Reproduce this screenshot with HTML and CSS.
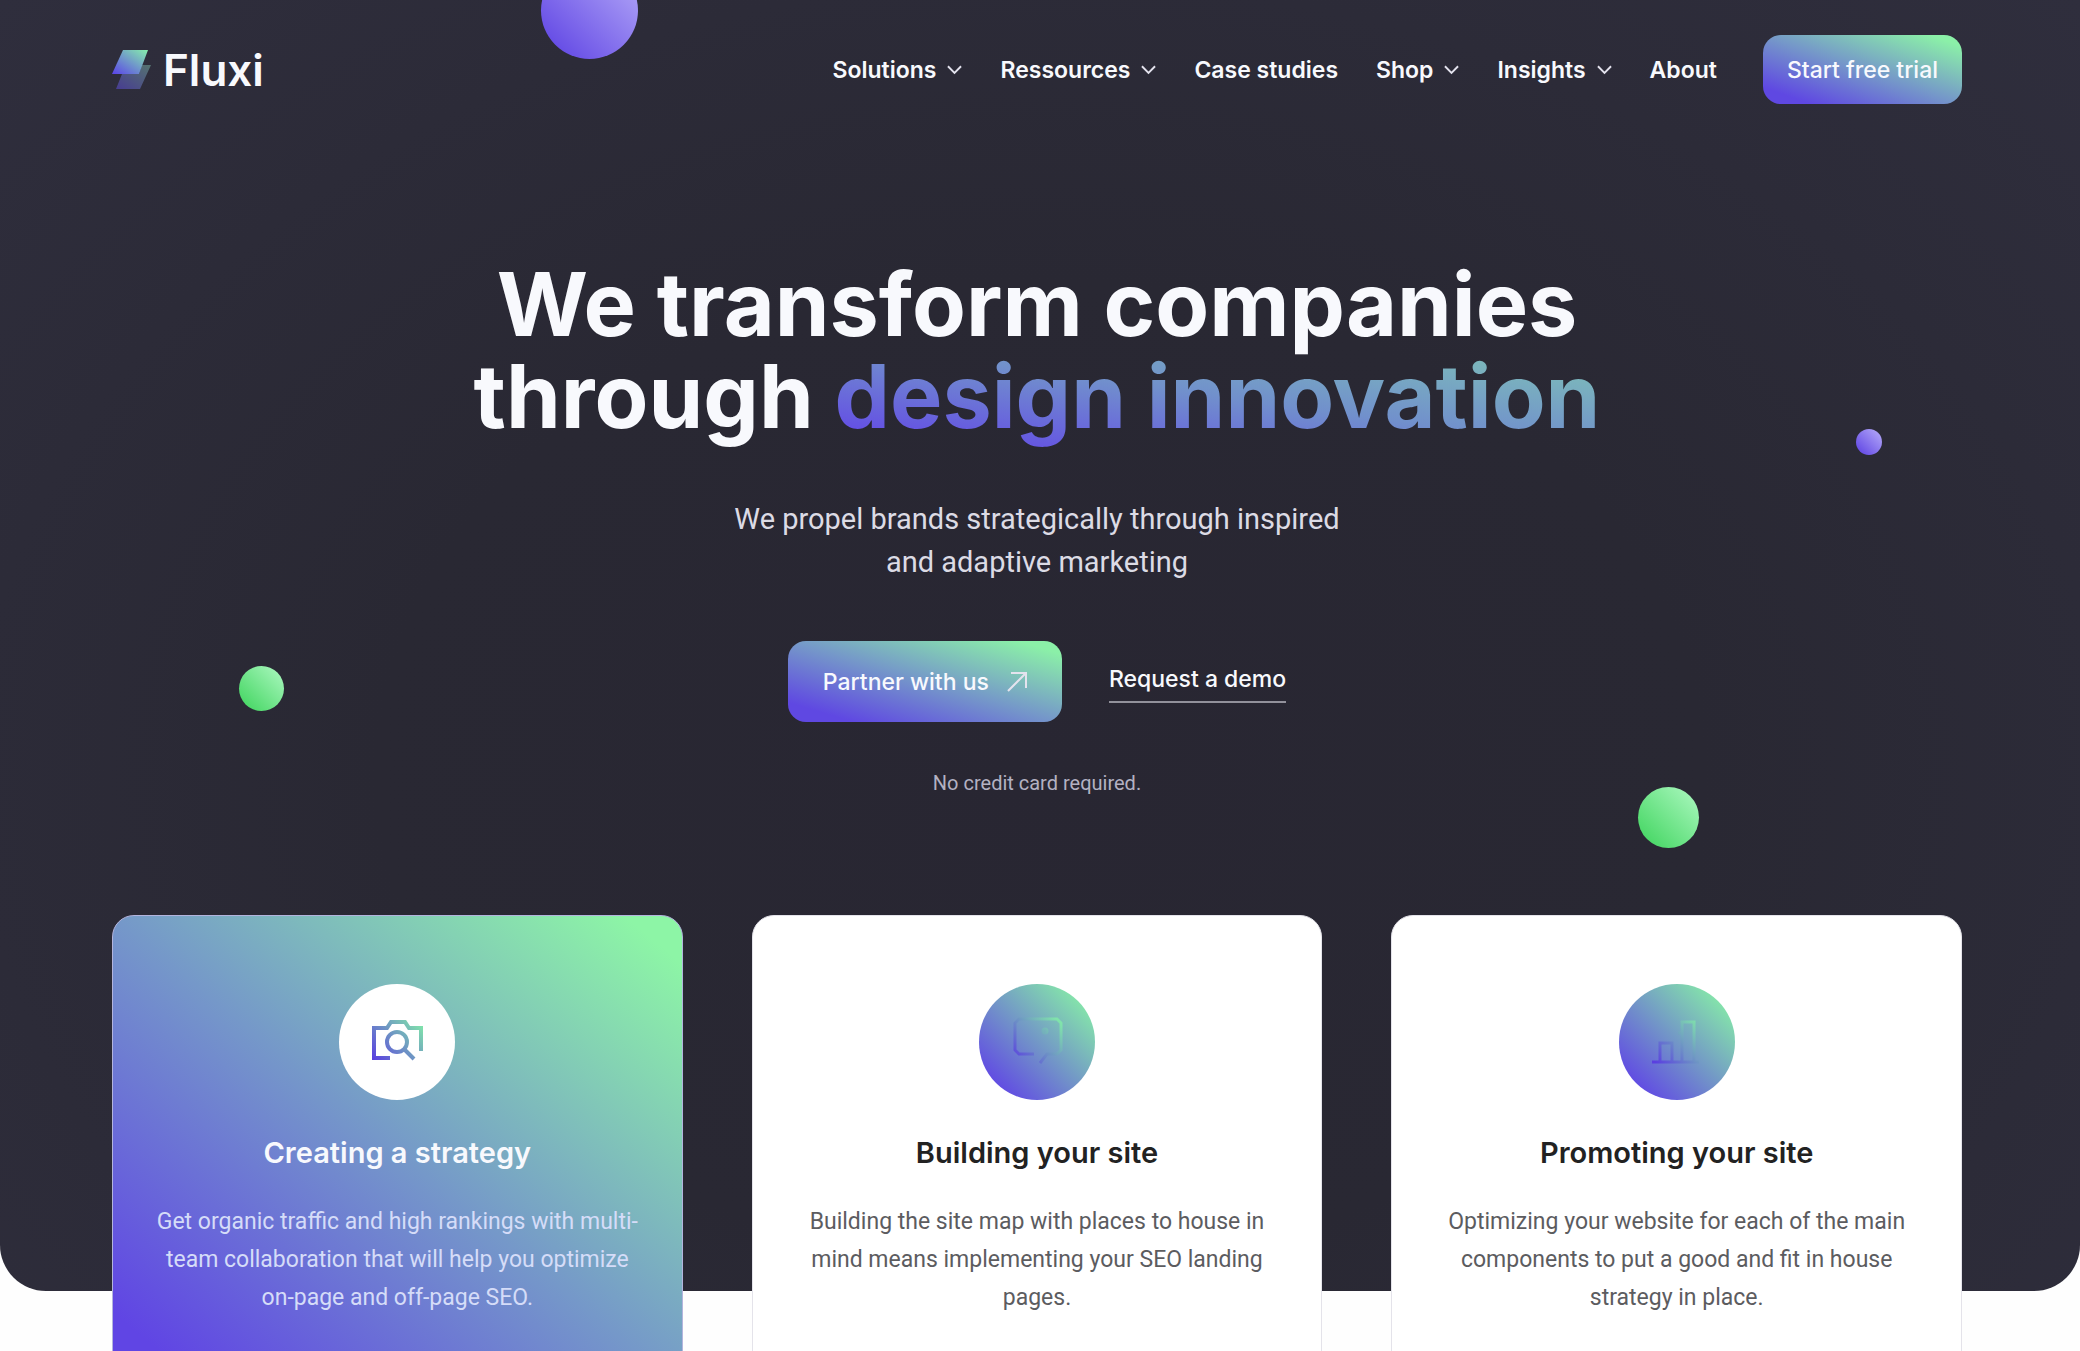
FILE: index.html
```html
<!DOCTYPE html>
<html lang="en">
<head>
<meta charset="utf-8">
<meta name="viewport" content="width=device-width, initial-scale=1">
<title>Fluxi</title>
<link rel="stylesheet" href="styles.css">
</head>
<body>
<div class="hero">
  <span class="ball ball-top"></span>
  <span class="ball ball-right"></span>
  <span class="ball ball-left"></span>
  <span class="ball ball-low"></span>

  <header class="header">
    <a class="logo" href="#">
      <svg width="40" height="40" viewBox="0 0 40 40" aria-hidden="true">
        <defs>
          <linearGradient id="logo-front" x1="0" y1="1" x2="1" y2="0"><stop offset="0" stop-color="#5a42e8"/><stop offset="1" stop-color="#86efac"/></linearGradient>
          <linearGradient id="logo-back" x1="0" y1="1" x2="1" y2="0"><stop offset="0" stop-color="#473c92"/><stop offset="1" stop-color="#55736f"/></linearGradient>
        </defs>
        <path d="M30 15H39L28 39H4L10 24H27Z" fill="url(#logo-back)"/>
        <path d="M11 0H36L27 24H0Z" fill="url(#logo-front)"/>
      </svg>
      <span>Fluxi</span>
    </a>
    <nav class="nav">
      <a href="#">Solutions <svg class="chevron" viewBox="0 0 16 10"><path d="M1 1L8 8L15 1"/></svg></a>
      <a href="#">Ressources <svg class="chevron" viewBox="0 0 16 10"><path d="M1 1L8 8L15 1"/></svg></a>
      <a href="#">Case studies</a>
      <a href="#">Shop <svg class="chevron" viewBox="0 0 16 10"><path d="M1 1L8 8L15 1"/></svg></a>
      <a href="#">Insights <svg class="chevron" viewBox="0 0 16 10"><path d="M1 1L8 8L15 1"/></svg></a>
      <a href="#">About</a>
    </nav>
    <button class="button button-small" type="button">Start free trial</button>
  </header>

  <section class="intro">
    <h1>We transform companies<br>through <span class="accent">design innovation</span></h1>
    <p class="lead">We propel brands strategically through inspired<br>and adaptive marketing</p>
    <div class="actions">
      <button class="button" type="button">Partner with us
        <svg class="arrow" viewBox="0 0 20 20"><path d="M1 19L19 1M4 1H19V16"/></svg>
      </button>
      <a class="demo" href="#">Request a demo</a>
    </div>
    <p class="note">No credit card required.</p>
  </section>
</div>

<main class="cards">
  <article class="card card-active">
    <svg class="icon" viewBox="0 0 116 116" aria-hidden="true">
      <defs>
        <linearGradient id="disc" x1="0" y1="1" x2="1" y2="0"><stop offset=".12" stop-color="#6048e4"/><stop offset=".9" stop-color="#86eba8"/></linearGradient>
        <linearGradient id="line" gradientUnits="userSpaceOnUse" x1="36" y1="78" x2="80" y2="38"><stop offset="0" stop-color="#5a3fe0"/><stop offset="1" stop-color="#80e3ab"/></linearGradient>
      </defs>
      <circle cx="58" cy="58" r="58" fill="#fff"/>
      <g fill="none" stroke="url(#line)" stroke-width="4">
        <path d="M51 74H35V44H48L52 38H66L70 44H82V67"/>
        <circle cx="58" cy="58" r="10"/>
        <path d="M65 65L75 75"/>
      </g>
    </svg>
    <h2>Creating a strategy</h2>
    <p>Get organic traffic and high rankings with multi-<br>team collaboration that will help you optimize<br>on-page and off-page SEO.</p>
  </article>
  <article class="card">
    <svg class="icon" viewBox="0 0 116 116" aria-hidden="true">
      <circle cx="58" cy="58" r="58" fill="url(#disc)"/>
      <g fill="none" stroke="url(#line)" stroke-width="3">
        <path d="M55 70H40L36 66V39L40 35H78L82 39V66L78 70H68L61 79"/>
        <circle cx="66" cy="47" r="2"/>
      </g>
    </svg>
    <h2>Building your site</h2>
    <p>Building the site map with places to house in<br>mind means implementing your SEO landing<br>pages.</p>
  </article>
  <article class="card">
    <svg class="icon" viewBox="0 0 116 116" aria-hidden="true">
      <circle cx="58" cy="58" r="58" fill="url(#disc)"/>
      <g fill="none" stroke="url(#line)" stroke-width="3">
        <path d="M33 78H80M41 78V59H53V78M53 78M59 49H63M63 78V38H75V78"/>
      </g>
    </svg>
    <h2>Promoting your site</h2>
    <p>Optimizing your website for each of the main<br>components to put a good and fit in house<br>strategy in place.</p>
  </article>
</main>
</body>
</html>
```
FILE: styles.css
```css
* { box-sizing: border-box; }

body {
  margin: 0;
  background: #fefefe;
  color: #222;
  font-family: Roboto, "Liberation Sans", sans-serif;
}

h1, h2, p { margin: 0; }
a { color: inherit; text-decoration: none; }

.hero {
  position: relative;
  overflow: hidden;
  padding: 35px 118px 492px 112px;
  border-radius: 0 0 46px 46px;
  background: radial-gradient(ellipse at 50% 60%, #282632 0%, #292833 45%, #2f2e3d 100%);
  color: #f8f9fd;
}

.header, .nav, .nav a, .logo, .actions, .button {
  display: flex;
  align-items: center;
}

.header { position: relative; }

.logo {
  gap: 11px;
  margin-right: auto;
  font: 600 44px/48px Inter, sans-serif;
}

.nav {
  gap: 38px;
  margin-right: 46px;
  font: 600 23px/32px Inter, sans-serif;
}

.nav a { gap: 11px; white-space: nowrap; }

.chevron, .arrow {
  fill: none;
  stroke: #e4e3ee;
  stroke-width: 2;
}

.chevron { width: 15px; height: 10px; }
.arrow { width: 20px; height: 20px; }

.button {
  justify-content: center;
  gap: 18px;
  height: 81px;
  padding: 0 35px;
  border: 0;
  border-radius: 18px;
  background: linear-gradient(to top right, #5f48e2 12%, #7598c9 50%, #8bf0a8 92%);
  color: #f8f9fd;
  font: 500 23px/32px Inter, sans-serif;
  white-space: nowrap;
}

.button-small { height: 69px; padding: 0 24px; }

.intro {
  position: relative;
  display: flex;
  flex-direction: column;
  align-items: center;
  padding-top: 154px;
  text-align: center;
}

h1 { font: 700 88px/92px Inter, sans-serif; }

.accent {
  background: linear-gradient(to top right, #6450e4 10%, #7190cc 50%, #80c8b4 100%);
  background-clip: text;
  -webkit-background-clip: text;
  color: transparent;
}

.lead {
  margin-top: 56px;
  color: #dcdbe5;
  font-size: 29px;
  line-height: 43px;
}

.actions { gap: 47px; margin-top: 57px; }

.demo {
  padding-bottom: 4px;
  border-bottom: 2px solid #92919b;
  font: 500 23px/36px Inter, sans-serif;
}

.note {
  margin-top: 45px;
  color: #b3b1c2;
  font-size: 20px;
  line-height: 32px;
}

.ball {
  position: absolute;
  border-radius: 50%;
  background: linear-gradient(to top right, #47d765 10%, #a3f5b8 90%);
}

.ball-top, .ball-right { background: linear-gradient(to top right, #684fe6 15%, #afa3f7 90%); }
.ball-top { top: -38px; left: 26%; width: 97px; height: 97px; }
.ball-right { top: 429px; right: 9.5%; width: 26px; height: 26px; }
.ball-left { top: 666px; left: 11.5%; width: 45px; height: 45px; }
.ball-low { top: 787px; right: 18.3%; width: 61px; height: 61px; }

.cards {
  position: relative;
  display: grid;
  grid-template-columns: repeat(3, 1fr);
  gap: 69px;
  margin-top: -376px;
  padding: 0 118px 60px 112px;
}

.card {
  display: flex;
  flex-direction: column;
  align-items: center;
  padding: 68px 24px 72px;
  border: 1px solid #e4e3ea;
  border-radius: 22px;
  background: #fff;
  text-align: center;
  white-space: nowrap;
}

.card-active {
  border-color: #b3b4dd;
  background: linear-gradient(to top right, #6045e4 8%, #7598c9 50%, #8df5a6 95%);
  color: #f8f9fd;
}

.icon { width: 116px; height: 116px; }

h2 {
  margin-top: 33px;
  font: 600 29px/40px Inter, sans-serif;
}

.card p {
  margin-top: 30px;
  color: #5c5c5f;
  font-size: 23px;
  line-height: 38px;
}

.card-active p { color: #d5dcf8; }
```
